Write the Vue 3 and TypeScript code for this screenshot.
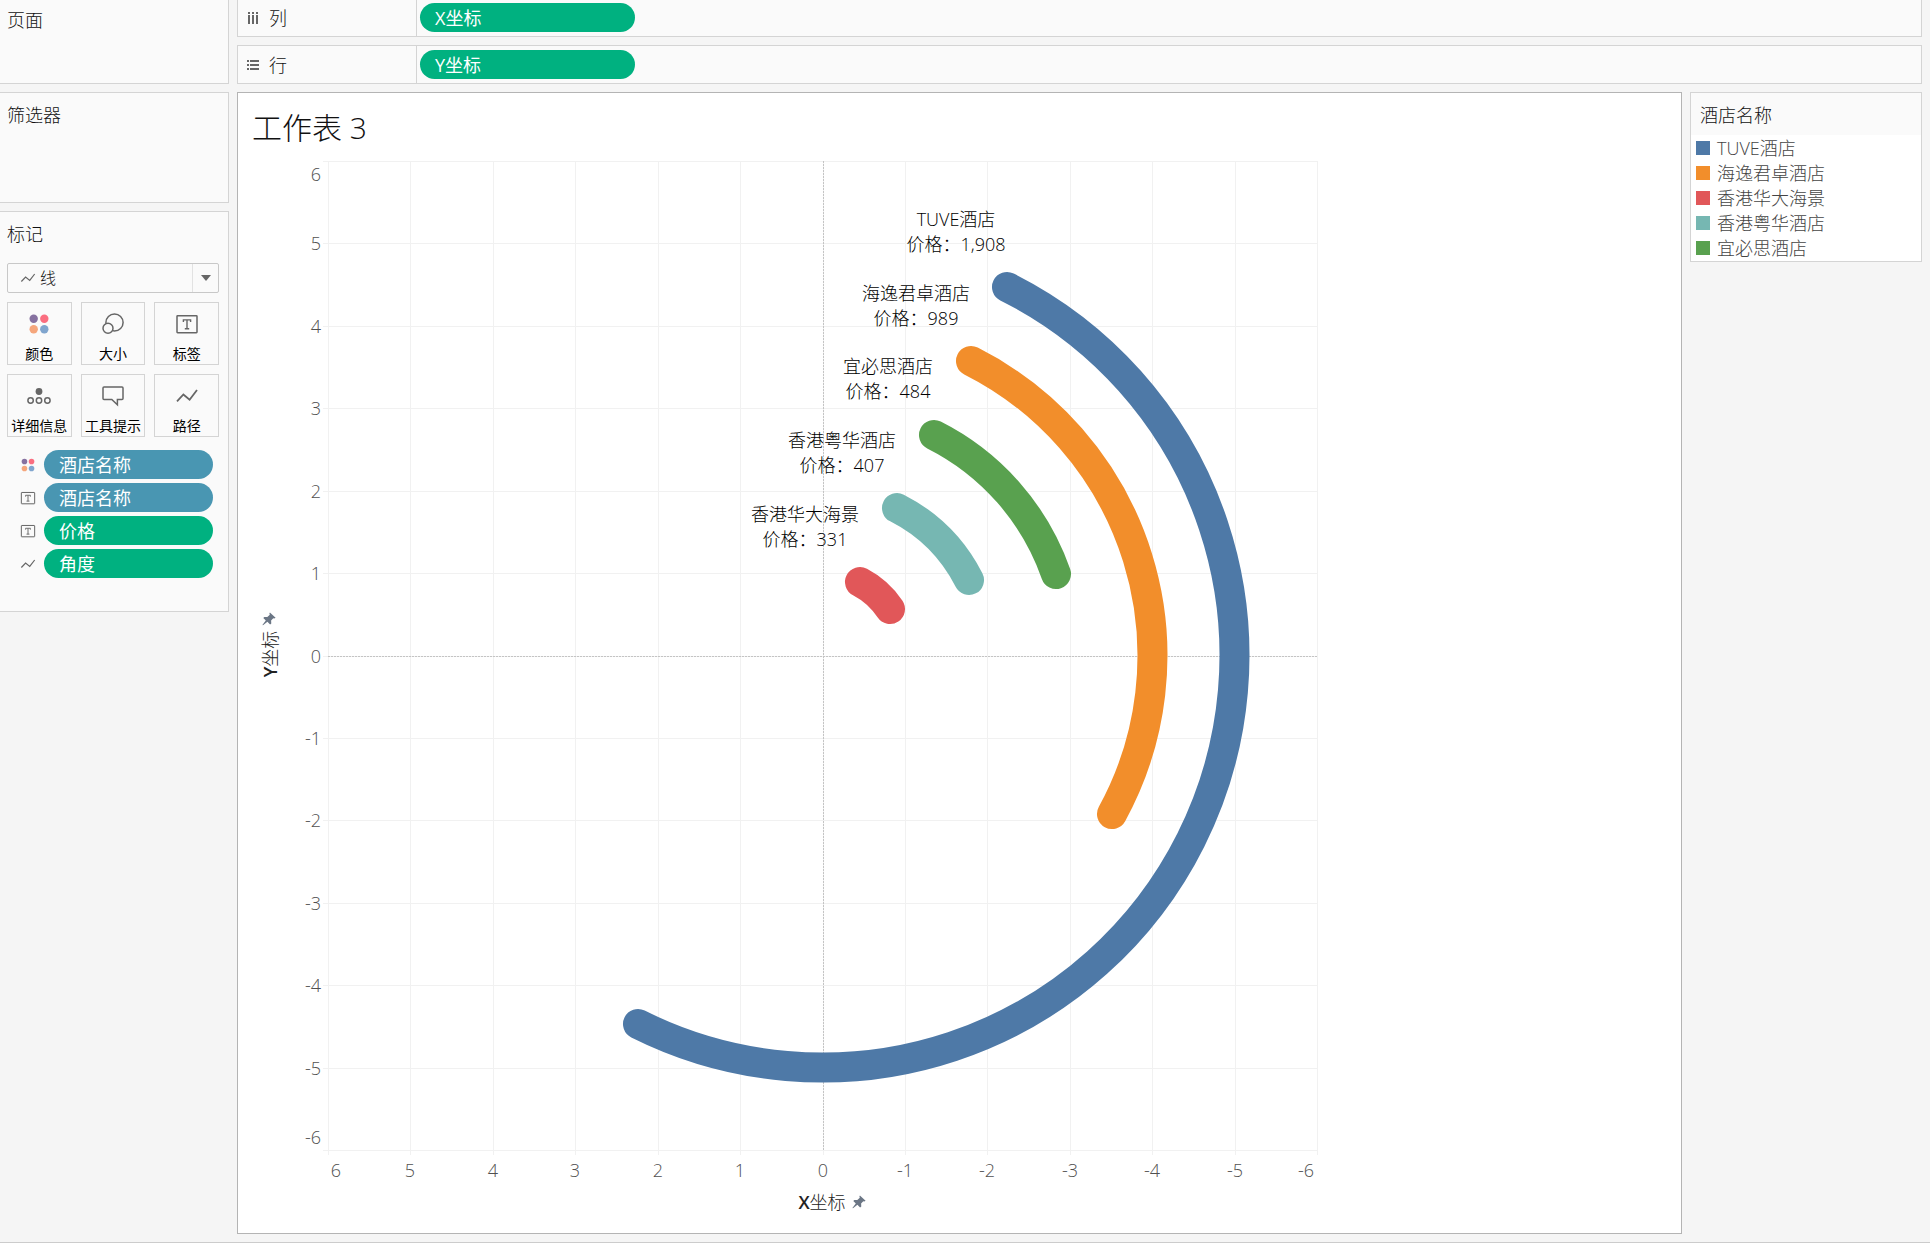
<script setup lang="ts">
interface Arc {
  name: string
  price: string
  color: string
  radius: number
  start: [number, number]
  end: [number, number]
  label: [number, number]
}

interface Field {
  icon: 'color' | 'text' | 'path'
  label: string
  kind: 'dimension' | 'measure'
}

const UNIT = 82.42
const NEAR = -495
const FAR = 494

const ticks = [6, 5, 4, 3, 2, 1, 0, -1, -2, -3, -4, -5, -6]
const pos = (value: number): number => Math.floor(-value * UNIT)

// End labels are pulled inwards so they stay within the axis range.
const tickX = (value: number): number =>
  value === 6 ? -487 : value === -6 ? 483 : pos(value)
const tickY = (value: number): number =>
  value === 6 ? -475 : value === -6 ? 488 : pos(value) + 7

const arcs: Arc[] = [
  { name: 'TUVE酒店', price: '1,908', color: '#4e79a7', radius: 412, start: [184, -369], end: [-185, 368], label: [133, -430] },
  { name: '海逸君卓酒店', price: '989', color: '#f28e2b', radius: 330, start: [148, -295], end: [289, 158], label: [93, -356] },
  { name: '宜必思酒店', price: '484', color: '#59a14f', radius: 247, start: [111, -221], end: [233, -82], label: [65, -283] },
  { name: '香港粤华酒店', price: '407', color: '#76b7b2', radius: 165, start: [74, -148], end: [146, -76], label: [19, -209] },
  { name: '香港华大海景', price: '331', color: '#e15759', radius: 82, start: [37, -74], end: [67, -47], label: [-18, -135] }
]

const arcPath = (a: Arc): string =>
  `M${a.start[0]} ${a.start[1]}A${a.radius} ${a.radius} 0 0 1 ${a.end[0]} ${a.end[1]}`

const legend = [
  { name: 'TUVE酒店', color: '#4e79a7' },
  { name: '海逸君卓酒店', color: '#f28e2b' },
  { name: '香港华大海景', color: '#e15759' },
  { name: '香港粤华酒店', color: '#76b7b2' },
  { name: '宜必思酒店', color: '#59a14f' }
]

const markButtons = [
  { icon: 'color', label: '颜色' },
  { icon: 'size', label: '大小' },
  { icon: 'text', label: '标签' },
  { icon: 'detail', label: '详细信息' },
  { icon: 'tooltip', label: '工具提示' },
  { icon: 'path', label: '路径' }
]

const fields: Field[] = [
  { icon: 'color', label: '酒店名称', kind: 'dimension' },
  { icon: 'text', label: '酒店名称', kind: 'dimension' },
  { icon: 'text', label: '价格', kind: 'measure' },
  { icon: 'path', label: '角度', kind: 'measure' }
]
</script>

<template>
  <div class="app">
    <svg class="defs" aria-hidden="true">
      <symbol id="i-color" viewBox="0 0 24 24">
        <circle cx="6.7" cy="6.7" r="4.2" fill="#8671a0" />
        <circle cx="17.3" cy="6.7" r="4.2" fill="#fa6e80" />
        <circle cx="6.7" cy="17.3" r="4.2" fill="#f5a67c" />
        <circle cx="17.3" cy="17.3" r="4.2" fill="#80a5ce" />
      </symbol>
      <symbol id="i-size" viewBox="0 0 24 24">
        <circle cx="13.5" cy="10.5" r="8.6" fill="none" stroke="#666" stroke-width="1.5" />
        <circle cx="7" cy="16.3" r="5" fill="#fafafa" stroke="#666" stroke-width="1.5" />
      </symbol>
      <symbol id="i-text" viewBox="0 0 24 24">
        <rect x="2" y="3.7" width="20" height="17" rx=".6" fill="none" stroke="#666" stroke-width="1.5" />
        <path d="M8.4 10V7.9h7.2V10M12 8v8.7M9.8 16.7h4.4" fill="none" stroke="#666" stroke-width="1.4" />
      </symbol>
      <symbol id="i-detail" viewBox="0 0 24 24">
        <circle cx="12" cy="7.5" r="3.4" fill="#666" />
        <g fill="none" stroke="#666" stroke-width="1.5">
          <circle cx="3.6" cy="16.5" r="2.7" />
          <circle cx="12" cy="16.5" r="2.7" />
          <circle cx="20.4" cy="16.5" r="2.7" />
        </g>
      </symbol>
      <symbol id="i-tooltip" viewBox="0 0 24 24">
        <path d="M3 3h18q1 0 1 1v10.4q0 1-1 1h-4.6v5.3l-5.6-5.3H3q-1 0-1-1V4q0-1 1-1z" fill="none" stroke="#666" stroke-width="1.5" />
      </symbol>
      <symbol id="i-path" viewBox="0 0 24 24">
        <path d="M2 17.3l6.4-6.8 6.2 5.2L22 6" fill="none" stroke="#666" stroke-width="1.8" />
      </symbol>
      <symbol id="i-pin" viewBox="0 0 14 14">
        <path d="M7.9.4l5.7 5.4-1.3.6-1-.2-2.2 2.4.2 2.9-1.2 1-2.7-2.7L1 13.3l-.6-.2 3.4-4.6L1.3 5.9l1-1 3 .1 2.5-2.3-.4-1.2z" fill="#6b7685" />
      </symbol>
    </svg>

    <aside class="side">
      <section class="card pages">
        <h2>页面</h2>
      </section>
      <section class="card filters">
        <h2>筛选器</h2>
      </section>
      <section class="card marks">
        <h2>标记</h2>
        <div class="mark-type">
          <svg class="type-icon"><use href="#i-path" /></svg>
          <select aria-label="标记类型">
            <option>线</option>
          </select>
          <span class="arrow"></span>
        </div>
        <div class="mark-grid">
          <button v-for="b in markButtons" :key="b.label" type="button">
            <svg width="24" height="24"><use :href="'#i-' + b.icon" /></svg>
            <span>{{ b.label }}</span>
          </button>
        </div>
        <ul class="fields">
          <li v-for="(f, i) in fields" :key="i">
            <svg width="16" height="16"><use :href="'#i-' + f.icon" /></svg>
            <button type="button" class="pill" :class="f.kind">{{ f.label }}</button>
          </li>
        </ul>
      </section>
    </aside>

    <main class="main">
      <section class="shelf first">
        <h2>
          <svg width="12" height="12" viewBox="0 0 12 12" fill="#666">
            <path d="M1 0h2v2H1zM5 0h2v2H5zM9 0h2v2H9zM1 3h2v9H1zM5 3h2v9H5zM9 3h2v9H9z" />
          </svg>
          列
        </h2>
        <div class="drop"><button type="button" class="pill measure">X坐标</button></div>
      </section>
      <section class="shelf">
        <h2>
          <svg width="12" height="12" viewBox="0 0 12 12" fill="#666">
            <path d="M0 1h2v2H0zM0 5h2v2H0zM0 9h2v2H0zM3 1h9v2H3zM3 5h9v2H3zM3 9h9v2H3z" />
          </svg>
          行
        </h2>
        <div class="drop"><button type="button" class="pill measure">Y坐标</button></div>
      </section>

      <div class="workspace">
        <section class="sheet">
          <h1>工作表 3</h1>
          <svg class="chart" width="1120" height="1070" viewBox="-585 -505 1120 1070" role="img" aria-label="酒店价格">
            <g class="grid">
              <template v-for="t in ticks" :key="t">
                <line :x1="pos(t) + 0.5" :x2="pos(t) + 0.5" :y1="NEAR" :y2="FAR + 5" />
                <line :x1="NEAR - 5" :x2="FAR" :y1="pos(t) + 0.5" :y2="pos(t) + 0.5" />
              </template>
            </g>
            <g class="zero">
              <line x1="0.5" x2="0.5" :y1="NEAR" :y2="FAR" />
              <line :x1="NEAR" :x2="FAR" y1="0.5" y2="0.5" />
            </g>
            <g class="ticks">
              <template v-for="t in ticks" :key="t">
                <text :x="tickX(t)" y="521" text-anchor="middle">{{ t }}</text>
                <text x="-502" :y="tickY(t)" text-anchor="end">{{ t }}</text>
              </template>
            </g>
            <g class="arcs">
              <path v-for="a in arcs" :key="a.name" :d="arcPath(a)" :stroke="a.color" />
            </g>
            <g class="labels">
              <text v-for="a in arcs" :key="a.name" :y="a.label[1]">
                <tspan :x="a.label[0]">{{ a.name }}</tspan>
                <tspan :x="a.label[0]" dy="25">价格：{{ a.price }}</tspan>
              </text>
            </g>
            <g class="axis-title">
              <text x="-1" y="553"><tspan class="latin">X</tspan>坐标</text>
              <use href="#i-pin" x="29" y="539" width="14" height="14" />
              <text transform="translate(-546 -2) rotate(-90)"><tspan class="latin">Y</tspan>坐标</text>
              <use href="#i-pin" x="-561" y="-44" width="14" height="14" />
            </g>
          </svg>
        </section>

        <aside class="legend">
          <h2>酒店名称</h2>
          <ul>
            <li v-for="l in legend" :key="l.name">
              <i :style="{ background: l.color }"></i>{{ l.name }}
            </li>
          </ul>
        </aside>
      </div>
    </main>
  </div>
</template>

<style>
body {
  margin: 0;
  background: #f5f5f5;
}
</style>

<style scoped>
.app {
  box-sizing: border-box;
  display: flex;
  gap: 8px;
  min-height: 100vh;
  padding: 0 8px 8px 0;
  border-bottom: 1px solid #ccc;
  background: #f5f5f5;
  color: #111;
  font: 18px/24px "Open Sans", "Noto Sans CJK SC", sans-serif;
}
.app * {
  box-sizing: border-box;
}
.defs {
  position: absolute;
  width: 0;
  height: 0;
}
h1,
h2,
ul {
  margin: 0;
  padding: 0;
  font-weight: 300;
  list-style: none;
}
h2 {
  font-size: 18px;
}
button {
  padding: 0;
  font: inherit;
}
.side {
  display: flex;
  flex: none;
  flex-direction: column;
  gap: 8px;
  width: 229px;
}
.card {
  padding: 10px 9px 0 7px;
  border: 1px solid #d4d4d4;
  border-left: 0;
  background: #fafafa;
}
.pages {
  height: 84px;
  padding-top: 8px;
  border-top: 0;
}
.filters {
  height: 111px;
}
.marks {
  padding-bottom: 33px;
}
.mark-type {
  position: relative;
  margin-top: 17px;
}
.mark-type select {
  display: block;
  width: 100%;
  height: 30px;
  padding: 0 0 0 32px;
  border: 1px solid #c8c8c8;
  border-radius: 2px;
  background: #fafafa;
  color: #111;
  font: 300 16px/28px "Open Sans", "Noto Sans CJK SC", sans-serif;
  appearance: none;
}
.type-icon {
  position: absolute;
  top: 7px;
  left: 13px;
  width: 16px;
  height: 16px;
}
.arrow {
  position: absolute;
  top: 1px;
  right: 1px;
  display: flex;
  align-items: center;
  justify-content: center;
  width: 26px;
  height: 28px;
  border-left: 1px solid #e2e2e2;
  pointer-events: none;
}
.arrow::before {
  border: 5px solid transparent;
  border-top: 6px solid #666;
  border-bottom: 0;
  content: "";
}
.mark-grid {
  display: grid;
  grid-template-columns: repeat(3, 1fr);
  gap: 9px;
  margin-top: 9px;
}
.mark-grid button {
  display: flex;
  flex-direction: column;
  align-items: center;
  height: 63px;
  padding-top: 9px;
  border: 1px solid #d4d4d4;
  background: #fafafa;
  color: #000;
  font-size: 14px;
  font-weight: 400;
  line-height: 20px;
  white-space: nowrap;
}
.mark-grid span {
  margin-top: 8px;
}
.fields {
  display: flex;
  flex-direction: column;
  gap: 4px;
  margin-top: 13px;
  padding: 0 6px 0 13px;
}
.fields li {
  display: flex;
  gap: 8px;
  align-items: center;
}
.fields .pill {
  flex: 1;
}
.pill {
  display: block;
  height: 29px;
  padding: 0 15px;
  border: 0;
  border-radius: 15px;
  color: #fff;
  font-size: 18px;
  font-weight: 400;
  line-height: 28px;
  text-align: left;
}
.dimension {
  background: #4996b2;
}
.measure {
  background: #00b180;
}
.main {
  display: flex;
  flex: 1;
  flex-direction: column;
  gap: 8px;
  min-width: 0;
}
.shelf {
  display: flex;
  height: 39px;
  border: 1px solid #d4d4d4;
  background: #fafafa;
}
.shelf.first {
  height: 37px;
  border-top: 0;
}
.shelf.first .drop {
  padding-bottom: 1px;
}
.shelf h2 {
  display: flex;
  gap: 10px;
  align-items: center;
  width: 179px;
  padding-left: 9px;
  border-right: 1px solid #d4d4d4;
}
.drop {
  display: flex;
  align-items: center;
  padding-left: 3px;
}
.drop .pill {
  width: 215px;
}
.workspace {
  display: flex;
  flex: 1;
  gap: 8px;
  align-items: flex-start;
}
.sheet {
  flex: 1;
  align-self: stretch;
  min-width: 0;
  border: 1px solid #b4b4b4;
  background: #fff;
}
.sheet h1 {
  height: 58px;
  padding: 15px 0 0 14px;
  font-size: 30px;
  line-height: 40px;
}
.chart {
  display: block;
  font-size: 18px;
  font-weight: 300;
}
.grid,
.zero {
  shape-rendering: crispEdges;
}
.grid line {
  stroke: #f1f1f1;
}
.zero line {
  stroke: #c4c4c4;
  stroke-dasharray: 2 1;
}
.ticks {
  fill: #505050;
}
.arcs path {
  fill: none;
  stroke-linecap: round;
  stroke-width: 30px;
}
.labels {
  fill: #000;
  text-anchor: middle;
}
.axis-title {
  fill: #222;
  text-anchor: middle;
}
.latin {
  font-weight: 600;
}
.legend {
  flex: none;
  width: 232px;
  border: 1px solid #d4d4d4;
  background: #fff;
}
.legend h2 {
  padding: 10px 9px 8px;
  background: #fafafa;
}
.legend ul {
  padding-bottom: 1px;
}
.legend li {
  display: flex;
  gap: 7px;
  align-items: center;
  height: 25px;
  padding-left: 5px;
  color: #444;
  font-weight: 300;
}
.legend i {
  width: 14px;
  height: 14px;
}
</style>
